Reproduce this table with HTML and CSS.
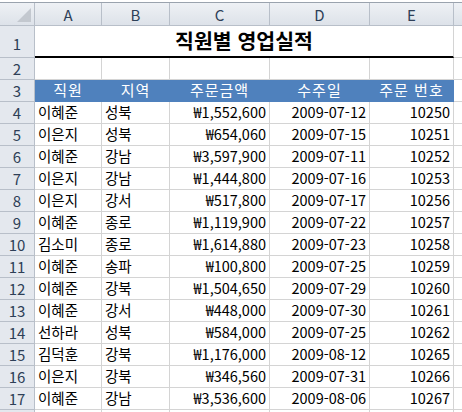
FILE: index.html
```html
<!DOCTYPE html>
<html lang="ko">
<head>
<meta charset="utf-8">
<title>직원별 영업실적</title>
<link rel="stylesheet" href="styles.css">
</head>
<body>
<div class="sheet">
  <div class="hd corner"><span class="tri"></span></div>
  <div class="hd col">A</div>
  <div class="hd col">B</div>
  <div class="hd col">C</div>
  <div class="hd col">D</div>
  <div class="hd col">E</div>
  <div class="hd col last"></div>

  <div class="hd rn r1">1</div>
  <div class="title">직원별 영업실적</div>
  <div class="c r1 last"></div>

  <div class="hd rn">2</div>
  <div class="c"></div><div class="c"></div><div class="c"></div><div class="c"></div><div class="c"></div><div class="c last"></div>

  <div class="hd rn">3</div>
  <div class="c th">직원</div><div class="c th">지역</div><div class="c th">주문금액</div><div class="c th">수주일</div><div class="c th">주문 번호</div><div class="c last"></div>

  <div class="hd rn">4</div><div class="c">이혜준</div><div class="c">성북</div><div class="c num">₩1,552,600</div><div class="c num">2009-07-12</div><div class="c num">10250</div><div class="c last"></div>
  <div class="hd rn">5</div><div class="c">이은지</div><div class="c">성북</div><div class="c num">₩654,060</div><div class="c num">2009-07-15</div><div class="c num">10251</div><div class="c last"></div>
  <div class="hd rn">6</div><div class="c">이혜준</div><div class="c">강남</div><div class="c num">₩3,597,900</div><div class="c num">2009-07-11</div><div class="c num">10252</div><div class="c last"></div>
  <div class="hd rn">7</div><div class="c">이은지</div><div class="c">강남</div><div class="c num">₩1,444,800</div><div class="c num">2009-07-16</div><div class="c num">10253</div><div class="c last"></div>
  <div class="hd rn">8</div><div class="c">이은지</div><div class="c">강서</div><div class="c num">₩517,800</div><div class="c num">2009-07-17</div><div class="c num">10256</div><div class="c last"></div>
  <div class="hd rn">9</div><div class="c">이혜준</div><div class="c">종로</div><div class="c num">₩1,119,900</div><div class="c num">2009-07-22</div><div class="c num">10257</div><div class="c last"></div>
  <div class="hd rn">10</div><div class="c">김소미</div><div class="c">종로</div><div class="c num">₩1,614,880</div><div class="c num">2009-07-23</div><div class="c num">10258</div><div class="c last"></div>
  <div class="hd rn">11</div><div class="c">이혜준</div><div class="c">송파</div><div class="c num">₩100,800</div><div class="c num">2009-07-25</div><div class="c num">10259</div><div class="c last"></div>
  <div class="hd rn">12</div><div class="c">이혜준</div><div class="c">강북</div><div class="c num">₩1,504,650</div><div class="c num">2009-07-29</div><div class="c num">10260</div><div class="c last"></div>
  <div class="hd rn">13</div><div class="c">이혜준</div><div class="c">강서</div><div class="c num">₩448,000</div><div class="c num">2009-07-30</div><div class="c num">10261</div><div class="c last"></div>
  <div class="hd rn">14</div><div class="c">선하라</div><div class="c">성북</div><div class="c num">₩584,000</div><div class="c num">2009-07-25</div><div class="c num">10262</div><div class="c last"></div>
  <div class="hd rn">15</div><div class="c">김덕훈</div><div class="c">강북</div><div class="c num">₩1,176,000</div><div class="c num">2009-08-12</div><div class="c num">10265</div><div class="c last"></div>
  <div class="hd rn">16</div><div class="c">이은지</div><div class="c">강북</div><div class="c num">₩346,560</div><div class="c num">2009-07-31</div><div class="c num">10266</div><div class="c last"></div>
  <div class="hd rn">17</div><div class="c">이혜준</div><div class="c">강남</div><div class="c num">₩3,536,600</div><div class="c num">2009-08-06</div><div class="c num">10267</div><div class="c last"></div>
  <div class="hd rn"></div><div class="c"></div><div class="c"></div><div class="c"></div><div class="c"></div><div class="c"></div><div class="c last"></div>
</div>
</body>
</html>
```

FILE: styles.css
```css
html, body {
  margin: 0;
  padding: 0;
  background: #ffffff;
  overflow: hidden;
}

body {
  padding-top: 3px;
  font-family: "Noto Sans CJK KR", "Noto Sans", sans-serif;
  font-size: 14.5px;
  color: #000000;
}

.sheet {
  display: grid;
  grid-template-columns: 35px 67px 68px 100px 100px 84px 20px;
  grid-template-rows: 23px 32px repeat(17, 22px);
  border-top: 1px solid #9aa3ae;
  margin-top: -1px;
}

.c {
  border-right: 1px solid #d4d4d4;
  border-bottom: 1px solid #d4d4d4;
  box-sizing: border-box;
  display: flex;
  align-items: flex-end;
  padding: 0 3px 2px 3px;
  line-height: 18px;
  white-space: nowrap;
  overflow: hidden;
}

.num {
  justify-content: flex-end;
}

.th {
  background: #4f81bd;
  color: #ffffff;
  justify-content: center;
  border-right-color: #4f81bd;
  border-bottom-color: #4f81bd;
  font-size: 15px;
  letter-spacing: 1px;
}

.hd {
  background: linear-gradient(#eef1f5, #dde2e9);
  border-right: 1px solid #b8bfc9;
  border-bottom: 1px solid #b8bfc9;
  box-sizing: border-box;
  color: #2e3f57;
  font-size: 15px;
  display: flex;
  align-items: center;
  justify-content: center;
  line-height: 18px;
}

.hd.col {
  padding-top: 1px;
}

.hd.rn {
  background: #e4e8ee;
  align-items: flex-end;
  padding-bottom: 1px;
}

.hd.r1 {
  padding-bottom: 4px;
}

.corner {
  position: relative;
}

.tri {
  position: absolute;
  right: 3px;
  bottom: 3px;
  width: 0;
  height: 0;
  border-left: 14px solid transparent;
  border-bottom: 14px solid #c3c8cf;
}

.title {
  grid-column: 2 / 7;
  border-bottom: 2px solid #000000;
  border-right: 1px solid #d4d4d4;
  box-sizing: border-box;
  display: flex;
  align-items: flex-end;
  justify-content: center;
  font-size: 20.5px;
  font-weight: bold;
  line-height: 24px;
  padding-bottom: 4px;
}

.last {
  border-right: none;
}
```
